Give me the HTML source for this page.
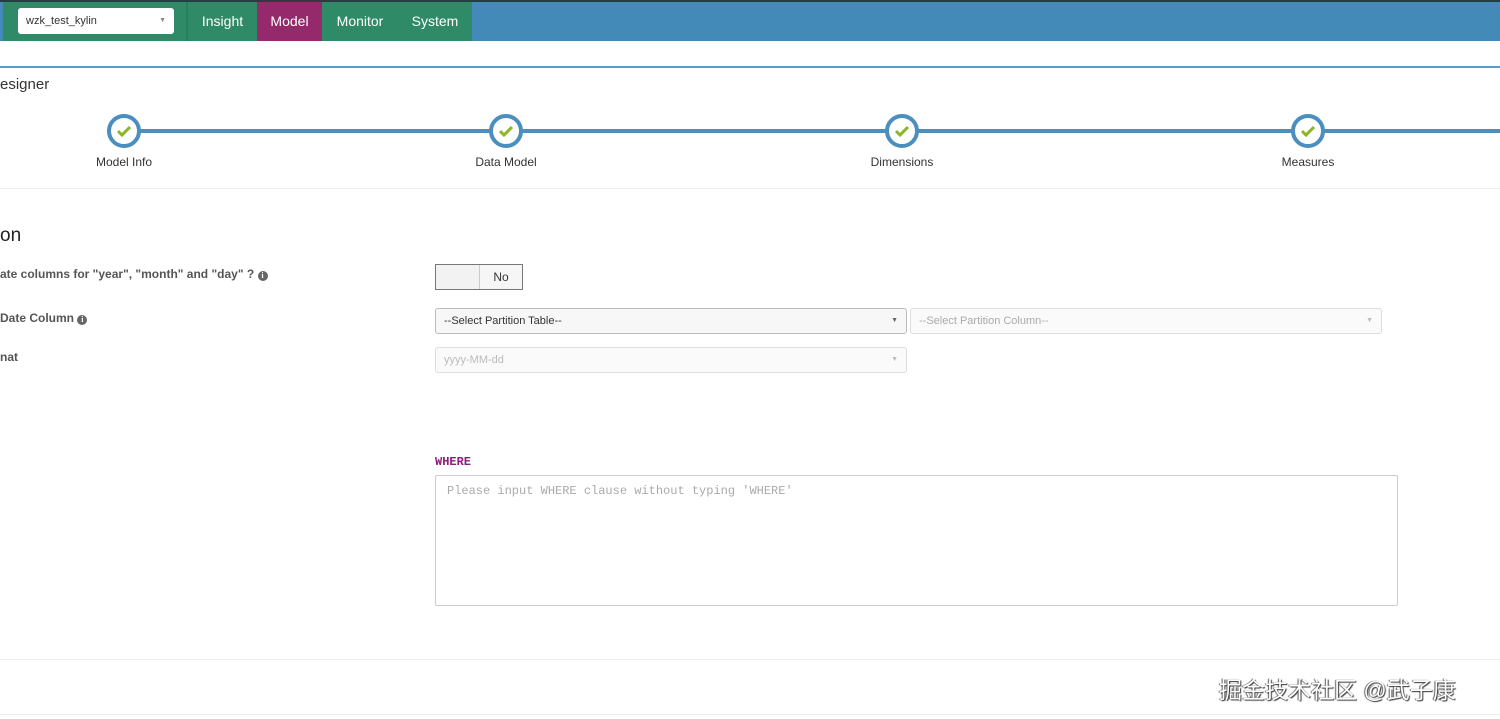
<!DOCTYPE html>
<html><head><meta charset="utf-8"><style>
*{box-sizing:border-box;margin:0;padding:0}
body{width:1500px;height:719px;background:#fff;font-family:"Liberation Sans",Arial,sans-serif;color:#333;position:relative;overflow:hidden}
.abs{position:absolute}
.nav{left:0;top:0;width:1500px;height:41px;background:#438ab9;border-top:2px solid #2d3a44}
.green{left:3px;top:2px;width:469px;height:39px;background:#2f8b67}
.navi{top:2px;height:39px;line-height:39px;color:#fff;font-size:14px;text-align:center}
.sel{left:18px;top:8px;width:156px;height:26px;background:#fff;border-radius:3px;font-size:11px;line-height:26px;padding-left:8px;color:#333}
.step{width:34px;height:34px;border:4px solid #4a8fbe;border-radius:50%;background:#fff;top:114px}
.step svg{position:absolute;left:6px;top:7px}
.lbl{font-size:12px;color:#333;top:155px;text-align:center;width:160px}
.lab{font-size:12px;font-weight:bold;color:#555}
.info{display:inline-block;width:10px;height:10px;border-radius:50%;background:#666;color:#fff;font-size:8px;line-height:10px;text-align:center;font-family:"Liberation Serif",serif;vertical-align:0px}
.box{border:1px solid #ddd;border-radius:3px;background:#fff;font-size:11px;line-height:24px;padding-left:8px}
.arr{position:absolute;right:8px;top:0;font-size:7px;color:#666}
</style></head><body>
<div class="abs nav"></div>
<div class="abs green"></div>
<div class="abs" style="left:186px;top:2px;width:2px;height:39px;background:#2a7d5c"></div>
<div class="abs sel">wzk_test_kylin<span class="arr" style="color:#888">▼</span></div>
<div class="abs navi" style="left:188px;width:69px">Insight</div>
<div class="abs navi" style="left:257px;width:65px;background:#942a6c">Model</div>
<div class="abs navi" style="left:322px;width:76px">Monitor</div>
<div class="abs navi" style="left:398px;width:74px">System</div>
<div class="abs" style="left:0;top:66px;width:1500px;height:2px;background:#5f9cc7"></div>
<div class="abs" style="left:0;top:76px;font-size:15px;color:#333">esigner</div>
<div class="abs" style="left:124px;top:129px;width:1376px;height:4px;background:#4a8fbe"></div>
<div class="abs step" style="left:107px"><svg width="14" height="12"><path d="M1 6 L5 10 L13 2" stroke="#8cb62a" stroke-width="3" fill="none"/></svg></div>
<div class="abs step" style="left:489px"><svg width="14" height="12"><path d="M1 6 L5 10 L13 2" stroke="#8cb62a" stroke-width="3" fill="none"/></svg></div>
<div class="abs step" style="left:885px"><svg width="14" height="12"><path d="M1 6 L5 10 L13 2" stroke="#8cb62a" stroke-width="3" fill="none"/></svg></div>
<div class="abs step" style="left:1291px"><svg width="14" height="12"><path d="M1 6 L5 10 L13 2" stroke="#8cb62a" stroke-width="3" fill="none"/></svg></div>
<div class="abs lbl" style="left:44px">Model Info</div>
<div class="abs lbl" style="left:426px">Data Model</div>
<div class="abs lbl" style="left:822px">Dimensions</div>
<div class="abs lbl" style="left:1228px">Measures</div>
<div class="abs" style="left:0;top:188px;width:1500px;height:1px;background:#eee"></div>
<div class="abs" style="left:0;top:225px;font-size:19px;color:#222">on</div>
<div class="abs lab" style="left:0;top:267px">ate columns for "year", "month" and "day" ? <span class="info">i</span></div>
<div class="abs lab" style="left:0;top:311px">Date Column <span class="info">i</span></div>
<div class="abs lab" style="left:0;top:350px">nat</div>
<div class="abs" style="left:435px;top:264px;width:88px;height:26px;border:1px solid #777;background:#f2f2f2;overflow:hidden">
<div class="abs" style="left:43px;top:0;width:43px;height:24px;border-left:1px solid #ccc;background:#f6f6f6;font-size:12px;line-height:24px;text-align:center">No</div></div>
<div class="abs box" style="left:435px;top:308px;width:472px;height:26px;border-color:#bbb;background:#f7f7f7;color:#333">--Select Partition Table--<span class="arr">▼</span></div>
<div class="abs box" style="left:910px;top:308px;width:472px;height:26px;color:#aaa;background:#fafafa">--Select Partition Column--<span class="arr" style="color:#bbb">▼</span></div>
<div class="abs box" style="left:435px;top:347px;width:472px;height:26px;color:#bbb;background:#fafafa">yyyy-MM-dd<span class="arr" style="color:#bbb">▼</span></div>
<div class="abs" style="left:435px;top:455px;font-family:'Liberation Mono',monospace;font-size:12px;font-weight:bold;color:#8e1b7e">WHERE</div>
<div class="abs" style="left:435px;top:475px;width:963px;height:131px;border:1px solid #ccc;border-radius:2px;font-family:'Liberation Mono',monospace;font-size:12px;color:#aaa;padding:8px 11px">Please input WHERE clause without typing 'WHERE'</div>
<div class="abs" style="left:0;top:659px;width:1500px;height:1px;background:#eee"></div>
<div class="abs" style="left:0;top:714px;width:1500px;height:1px;background:#eee"></div>
<div class="abs" style="left:1219px;top:671px;font-size:23px;color:#fff;text-shadow:1px 1px 1px #333,-1px 0 1px #555;font-family:'Liberation Sans','Noto Sans CJK SC',sans-serif">掘金技术社区 @武子康</div>
</body></html>
